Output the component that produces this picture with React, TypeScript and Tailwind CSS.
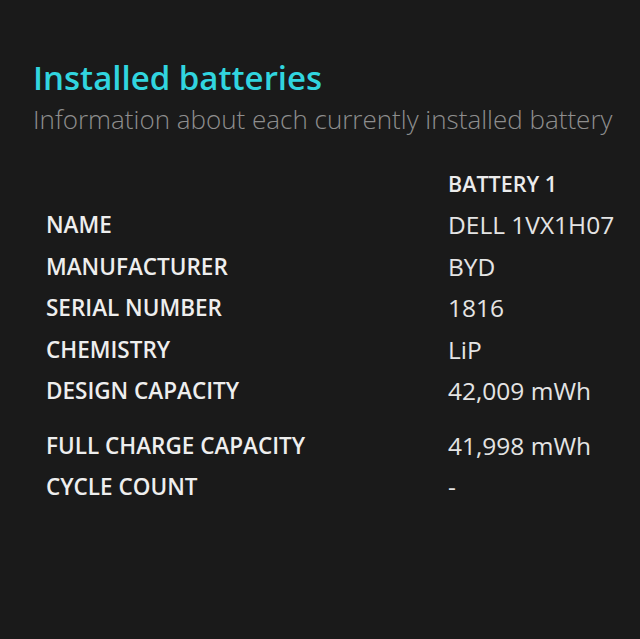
const rows: { label: string; value: string; gap?: boolean }[] = [
  { label: "NAME", value: "DELL 1VX1H07" },
  { label: "MANUFACTURER", value: "BYD" },
  { label: "SERIAL NUMBER", value: "1816" },
  { label: "CHEMISTRY", value: "LiP" },
  { label: "DESIGN CAPACITY", value: "42,009 mWh" },
  { label: "FULL CHARGE CAPACITY", value: "41,998 mWh", gap: true },
  { label: "CYCLE COUNT", value: "-" },
];

export default function App() {
  return (
    <main
      className="w-[640px] h-[639px] bg-[#1a1a1a] overflow-hidden"
      style={{ fontFamily: '"Open Sans", "Noto Sans", sans-serif' }}
    >
      <div className="pt-[56px] pl-[33px]">
        {/* Header */}
        <h1 className="text-[33px] leading-[44px] font-semibold text-[#31d5df]">
          Installed batteries
        </h1>
        <p className="mt-[2px] text-[26px] leading-[34px] text-[#8e8e8e] font-light">
          Information about each currently installed battery
        </p>
      </div>

      {/* Table */}
      <div className="mt-[28px] pl-[46px] grid grid-cols-[402px_1fr]">
        <div />
        <div className="h-[40px] leading-[40px] font-semibold text-[#ececec] text-[21.5px]">
          BATTERY 1
        </div>
        {rows.map((r) => (
          <div key={r.label} className="contents">
            <div
              className={`h-[41.5px] leading-[41.5px] font-semibold text-[#eeeeee] text-[22.5px] ${
                r.gap ? "mt-[13px]" : ""
              }`}
            >
              {r.label}
            </div>
            <div
              className={`h-[41.5px] leading-[41.5px] text-[#e4e4e4] text-[24.5px] ${
                r.gap ? "mt-[13px]" : ""
              }`}
            >
              {r.value}
            </div>
          </div>
        ))}
      </div>
    </main>
  );
}
